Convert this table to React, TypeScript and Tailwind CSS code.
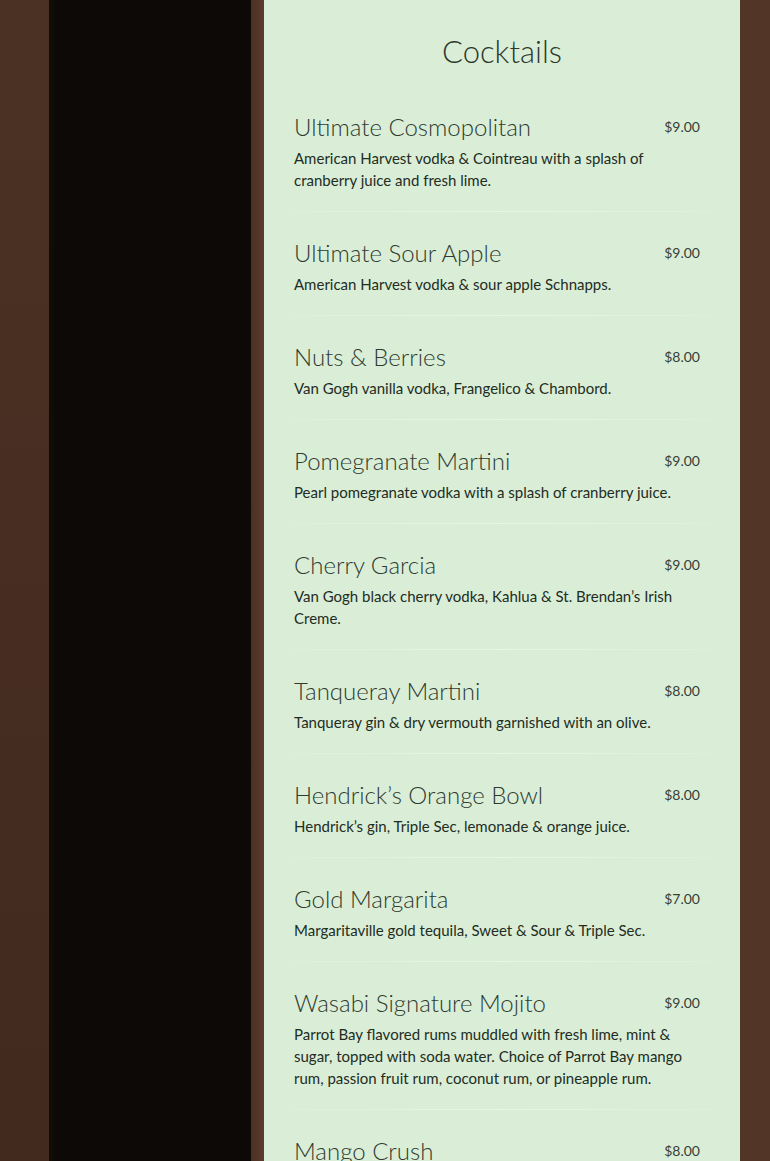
import React from 'react'

type Drink = { name: string; price: string; desc?: string }

const drinks: Drink[] = [
  { name: 'Ultimate Cosmopolitan', price: '$9.00', desc: 'American Harvest vodka & Cointreau with a splash of cranberry juice and fresh lime.' },
  { name: 'Ultimate Sour Apple', price: '$9.00', desc: 'American Harvest vodka & sour apple Schnapps.' },
  { name: 'Nuts & Berries', price: '$8.00', desc: 'Van Gogh vanilla vodka, Frangelico & Chambord.' },
  { name: 'Pomegranate Martini', price: '$9.00', desc: 'Pearl pomegranate vodka with a splash of cranberry juice.' },
  { name: 'Cherry Garcia', price: '$9.00', desc: 'Van Gogh black cherry vodka, Kahlua & St. Brendan\u2019s Irish Creme.' },
  { name: 'Tanqueray Martini', price: '$8.00', desc: 'Tanqueray gin & dry vermouth garnished with an olive.' },
  { name: 'Hendrick\u2019s Orange Bowl', price: '$8.00', desc: 'Hendrick\u2019s gin, Triple Sec, lemonade & orange juice.' },
  { name: 'Gold Margarita', price: '$7.00', desc: 'Margaritaville gold tequila, Sweet & Sour & Triple Sec.' },
  { name: 'Wasabi Signature Mojito', price: '$9.00', desc: 'Parrot Bay flavored rums muddled with fresh lime, mint & sugar, topped with soda water. Choice of Parrot Bay mango rum, passion fruit rum, coconut rum, or pineapple rum.' },
  { name: 'Mango Crush', price: '$8.00' },
]

const MenuItem = ({ d, last }: { d: Drink; last: boolean }) => (
  <div>
    <div className='pt-[25px] pb-[20px]'>
      <div className='flex items-center justify-between pr-[10px]'>
        <h3 className='text-[24px] leading-[32px] font-light text-[#2f3b30]'>{d.name}</h3>
        <span className='text-[14px] leading-[22px] text-[#364036]'>{d.price}</span>
      </div>
      {d.desc && (
        <p className='mt-[4px] pr-[10px] text-[15px] leading-[22px] text-[#232c23]'>{d.desc}</p>
      )}
    </div>
    {!last && <div className='h-px bg-gradient-to-r from-white/10 via-white/40 to-white/10' />}
  </div>
)

export default function App() {
  return (
    <div
      className='h-[1161px] overflow-hidden flex bg-gradient-to-b from-[#4b3123] to-[#432a1f]'
      style={{ fontFamily: 'Lato, "Noto Sans", sans-serif' }}
    >
      <div className='w-[49px] shrink-0' />
      <div className='w-[202px] shrink-0 bg-[#0d0906] border-l-[5px] border-[#120c09]' />
      <div className='w-[13px] shrink-0 bg-gradient-to-r from-[#4a3024] to-[#5b3b2d]' />
      <main className='w-[476px] shrink-0 bg-[#daeed7] px-[30px] pt-[31px]'>
        <h2 className='text-center text-[31px] leading-[40px] font-light text-[#2d372d] mb-[15px]'>Cocktails</h2>
        {drinks.map((d, i) => (
          <MenuItem key={d.name} d={d} last={i === drinks.length - 1} />
        ))}
      </main>
      <div className='flex-1 bg-[#523526]' />
    </div>
  )
}
